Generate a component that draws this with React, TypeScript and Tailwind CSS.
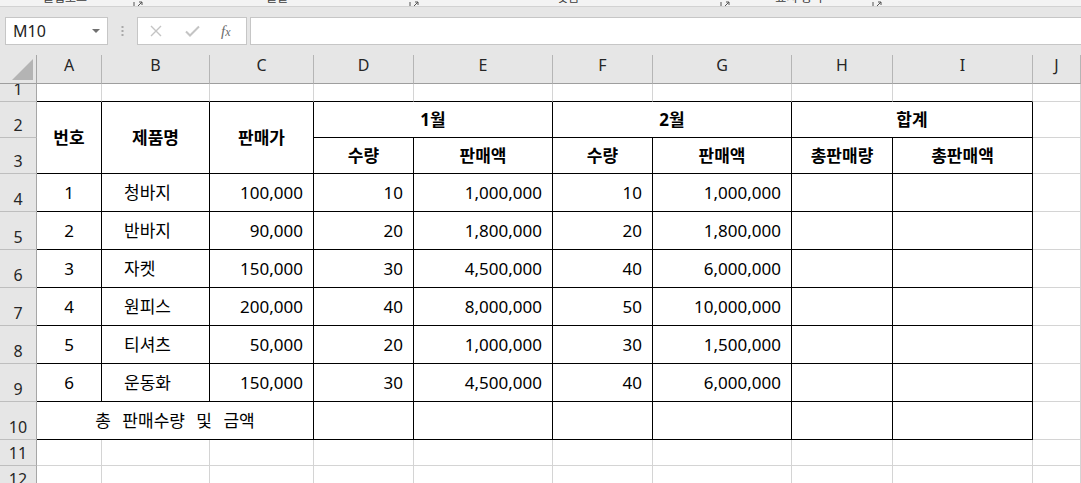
import type { ReactNode } from 'react'

// Sheet geometry read off the reference: one row-header column, A..I, then J fills the rest.
const COLS = ['A', 'B', 'C', 'D', 'E', 'F', 'G', 'H', 'I', 'J']

const ROWS: [number, string, string, string, string, string, string][] = [
  [1, '청바지', '100,000', '10', '1,000,000', '10', '1,000,000'],
  [2, '반바지', '90,000', '20', '1,800,000', '20', '1,800,000'],
  [3, '자켓', '150,000', '30', '4,500,000', '40', '6,000,000'],
  [4, '원피스', '200,000', '40', '8,000,000', '50', '10,000,000'],
  [5, '티셔츠', '50,000', '20', '1,000,000', '30', '1,500,000'],
  [6, '운동화', '150,000', '30', '4,500,000', '40', '6,000,000'],
]

interface CellProps {
  children?: ReactNode
  /** black right edge */
  r?: boolean
  /** black bottom edge */
  b?: boolean
  className?: string
}

function Cell({ children, r = false, b = false, className = '' }: CellProps) {
  return (
    <div
      className={`flex items-center overflow-hidden whitespace-nowrap border-r border-b text-[17px] leading-none text-black ${
        r ? 'border-r-black' : 'border-r-[#d4d4d4]'
      } ${b ? 'border-b-black' : 'border-b-[#d4d4d4]'} ${className}`}
    >
      {children}
    </div>
  )
}

function RowHead({ n }: { n: number }) {
  return (
    <div className="flex items-end justify-center overflow-hidden border-r border-b border-r-[#a6a6a6] border-b-[#bebebe] bg-[#e6e6e6] pb-[4px] text-[16px] leading-none text-[#262626]">
      {n}
    </div>
  )
}

function Launcher() {
  return (
    <svg width="10" height="10" viewBox="0 0 10 10" className="shrink-0">
      <path d="M1 1v8h8" fill="none" stroke="#555" strokeWidth="1" />
      <path d="M4 6l5-5M9 4V1H6" fill="none" stroke="#555" strokeWidth="1" />
    </svg>
  )
}

function RibbonEdge() {
  // only the bottom few pixels of the ribbon's group labels are on screen
  return (
    <div className="h-[7px] overflow-hidden border-b border-[#d2d2d2] bg-[#f3f3f3]">
      <div className="-mt-[9px] flex h-[14px] items-end pl-[43px] text-[12px] leading-[14px] text-[#3c3c3c]">
        <span>클립보드</span>
        <span className="ml-[46px] -mb-[6px]">
          <Launcher />
        </span>
        <span className="ml-[123px]">글꼴</span>
        <span className="ml-[121px] -mb-[6px]">
          <Launcher />
        </span>
        <span className="ml-[138px]">맞춤</span>
        <span className="ml-[141px] -mb-[6px]">
          <Launcher />
        </span>
        <span className="ml-[45px]">표시 형식</span>
        <span className="ml-[49px] -mb-[6px]">
          <Launcher />
        </span>
      </div>
    </div>
  )
}

function FormulaBar() {
  return (
    <div className="flex h-[48px] items-start bg-[#e6e6e6] pt-[10px]">
      <div className="ml-[5px] flex h-[28px] w-[103px] items-center justify-between border border-[#c6c6c6] bg-white pl-[7px] pr-[7px]">
        <span className="text-[16px] leading-none text-[#222]">M10</span>
        <svg width="8" height="4" viewBox="0 0 8 4">
          <path d="M0 0h8L4 4z" fill="#707070" />
        </svg>
      </div>
      <div className="flex h-[28px] w-[29px] items-center justify-center">
        <svg width="3" height="10" viewBox="0 0 3 10">
          <rect x="0.5" y="0" width="2" height="2" fill="#a8a8a8" />
          <rect x="0.5" y="4" width="2" height="2" fill="#a8a8a8" />
          <rect x="0.5" y="8" width="2" height="2" fill="#a8a8a8" />
        </svg>
      </div>
      <div className="flex h-[28px] w-[110px] items-center border border-[#c6c6c6] bg-white pl-[12px]">
        <svg width="12" height="12" viewBox="0 0 12 12">
          <path d="M1 1l10 10M11 1L1 11" stroke="#c4c4c4" strokeWidth="1.4" />
        </svg>
        <svg width="15" height="12" viewBox="0 0 15 12" className="ml-[23px]">
          <path d="M1 6.5l4 4L14 1.5" fill="none" stroke="#c4c4c4" strokeWidth="2" />
        </svg>
        <span className="ml-[21px] font-['Liberation_Serif',serif] text-[15px] italic leading-none text-[#6b6b6b]">
          f<span className="text-[12px]">x</span>
        </span>
      </div>
      <div className="ml-[3px] h-[28px] flex-1 border border-r-0 border-[#c6c6c6] bg-white" />
    </div>
  )
}

export default function App() {
  const head = 'text-[17px] font-bold justify-center'
  return (
    <div className="h-screen overflow-hidden bg-white font-['Noto_Sans','Noto_Sans_CJK_KR',sans-serif]">
      <RibbonEdge />
      <FormulaBar />

      <div className="grid grid-cols-[37px_65px_108px_104px_100px_139px_100px_139px_101px_140px_1fr] grid-rows-[29px_18px_36px_36px_repeat(7,38px)_26px_26px]">
        {/* column letters */}
        <div className="relative border-r border-b border-r-[#a6a6a6] border-b-[#9e9e9e] bg-[#e6e6e6]">
          <svg width="37" height="28" viewBox="0 0 37 28" className="absolute inset-0">
            <path d="M33 4v21H12z" fill="#b4b4b4" />
          </svg>
        </div>
        {COLS.map((c) => (
          <div
            key={c}
            className="flex justify-center border-r border-b border-r-[#b5b5b5] border-b-[#9e9e9e] bg-[#e6e6e6] pt-[2px] text-[16px] leading-none text-[#262626]"
          >
            {c}
          </div>
        ))}

        {/* row 1 */}
        <RowHead n={1} />
        {COLS.slice(0, 9).map((c) => (
          <Cell key={c} b />
        ))}
        <Cell />

        {/* rows 2-3: headings */}
        <RowHead n={2} />
        <Cell r b className={`row-span-2 ${head}`}>번호</Cell>
        <Cell r b className={`row-span-2 ${head}`}>제품명</Cell>
        <Cell r b className={`row-span-2 ${head}`}>판매가</Cell>
        <Cell r b className={`col-span-2 ${head}`}>1월</Cell>
        <Cell r b className={`col-span-2 ${head}`}>2월</Cell>
        <Cell r b className={`col-span-2 ${head}`}>합계</Cell>
        <Cell />

        <RowHead n={3} />
        <Cell r b className={head}>수량</Cell>
        <Cell r b className={head}>판매액</Cell>
        <Cell r b className={head}>수량</Cell>
        <Cell r b className={head}>판매액</Cell>
        <Cell r b className={head}>총판매량</Cell>
        <Cell r b className={head}>총판매액</Cell>
        <Cell />

        {/* rows 4-9: data */}
        {ROWS.map(([no, name, price, q1, s1, q2, s2], i) => (
          <div key={no} className="contents">
            <RowHead n={i + 4} />
            <Cell r b className="justify-center">{no}</Cell>
            <Cell r b className="pl-[22px]">{name}</Cell>
            <Cell r b className="justify-end pr-[10px]">{price}</Cell>
            <Cell r b className="justify-end pr-[10px]">{q1}</Cell>
            <Cell r b className="justify-end pr-[10px]">{s1}</Cell>
            <Cell r b className="justify-end pr-[10px]">{q2}</Cell>
            <Cell r b className="justify-end pr-[10px]">{s2}</Cell>
            <Cell r b />
            <Cell r b />
            <Cell />
          </div>
        ))}

        {/* row 10: totals */}
        <RowHead n={10} />
        <Cell r b className="col-span-3 justify-center [word-spacing:7px]">총 판매수량 및 금액</Cell>
        <Cell r b />
        <Cell r b />
        <Cell r b />
        <Cell r b />
        <Cell r b />
        <Cell r b />
        <Cell />

        {[11, 12].map((n) => (
          <div key={n} className="contents">
            <RowHead n={n} />
            {COLS.map((c) => (
              <Cell key={c} />
            ))}
          </div>
        ))}
      </div>
    </div>
  )
}
